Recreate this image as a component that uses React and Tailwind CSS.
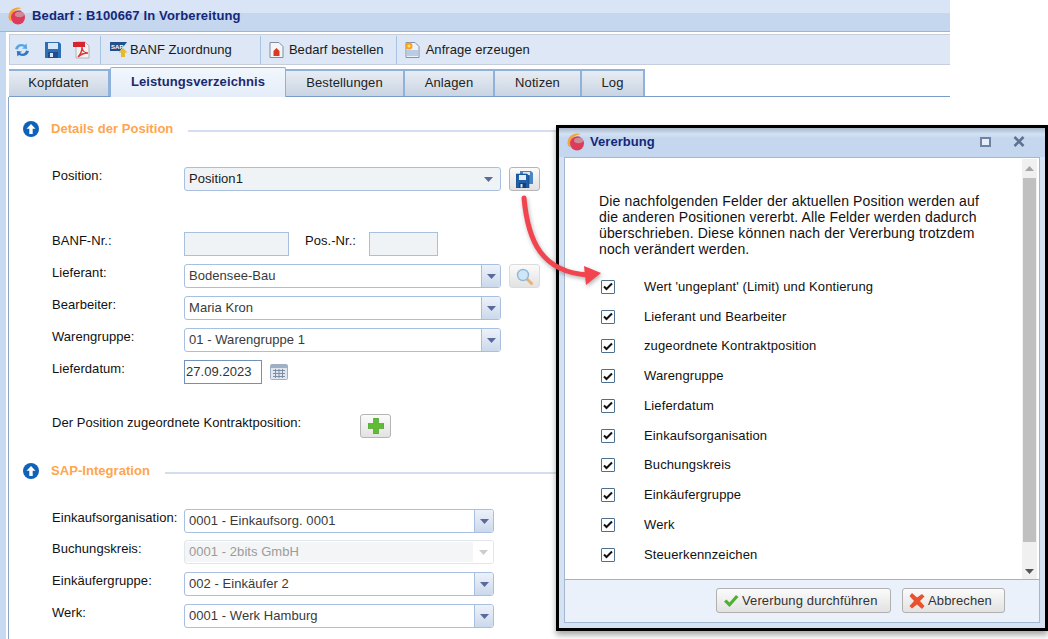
import React from "react";

const Logo = () => (
  <svg width="18" height="18" viewBox="0 0 18 18" className="shrink-0">
    <path d="M0.500 10C0.500 4.500 5 .5 10 .5c1.500 0 2.500.3 3.500.8C8 2 3.500 5.500 3 11c-.2 1.200 0 2.500.5 3.500C1.500 13.500.5 12 .5 10z" fill="#f2a53c" />
    <path d="M3.500 9.500C4.500 5.500 8 3 12.500 3l1 1.500L5 11z" fill="#a8a8a8" />
    <circle cx="10" cy="10.500" r="7" fill="#dc3b5a" />
    <ellipse cx="11.500" cy="7.500" rx="4.500" ry="2.800" fill="#c9a5ac" opacity=".75" />
  </svg>
);

const Refresh = () => (
  <svg width="18" height="18" viewBox="0 0 18 18">
    <path d="M2 8C3 3.500 8 1.500 12 4l1.600-1.400.6 5.400-5.200-.6L11 6C8.500 4.500 5.500 5.500 5 8.500z" fill="#56a6e6" />
    <path d="M16 10c-1 4.500-6 6.500-10 4l-1.600 1.400L3.800 10l5.200.6L7 12c2.500 1.500 5.500.5 6-2.500z" fill="#2f78c8" />
  </svg>
);

const Floppy = ({ c = "#2c6fb5" }) => (
  <svg width="16" height="16" viewBox="0 0 16 16">
    <path d="M0 0h14l2 2v14H0z" fill={c} />
    <rect x="3" y="1" width="10" height="6" fill="#d9e7f5" />
    <rect x="3" y="10" width="10" height="6" fill="#1c4f8c" />
    <rect x="5" y="11" width="3" height="4" fill="#d9e7f5" />
  </svg>
);

const DoubleFloppy = () => (
  <svg width="17" height="17" viewBox="0 0 17 17">
    <path d="M4 0h11l2 2v11H4z" fill="#4a86c5" />
    <rect x="7" y="1" width="7" height="3" fill="#d9e7f5" />
    <path d="M0 3h11l2 2v12H0z" fill="#1f5ea8" stroke="#173f73" strokeWidth=".5" />
    <rect x="3" y="4" width="7" height="5" fill="#e4eef8" />
    <rect x="3" y="12" width="7" height="5" fill="#143f78" />
    <rect x="4.500" y="13" width="2" height="3.500" fill="#d9e7f5" />
  </svg>
);

const Pdf = () => (
  <svg width="18" height="18" viewBox="0 0 18 18">
    <path d="M3 1h9l4 4v12H3z" fill="#f2f2f2" stroke="#b5b5b5" />
    <path d="M0 1h12v5H0z" fill="#d8242c" />
    <path d="M5 16c2-2 4-6 4-10 0 3 2 6 6 6-4 0-7 1-10 4z" fill="none" stroke="#e0333a" strokeWidth="1.400" />
  </svg>
);

const SapIcon = () => (
  <svg width="18" height="16" viewBox="0 0 18 16">
    <path d="M0 0h17l-7 9H0z" fill="#1f4f8f" />
    <text x="1" y="7" fontSize="6" fontWeight="700" fill="#fff" fontFamily="'Liberation Sans',sans-serif">SAP</text>
    <path d="M13 6l4.500 4.500H15V15h-4v-4.500H8.500z" fill="#e6b92e" />
  </svg>
);

const DocRed = () => (
  <svg width="15" height="16" viewBox="0 0 15 16">
    <path d="M1 .5h9l4 4v11H1z" fill="#f3f5f9" stroke="#7f8ea6" />
    <path d="M7.500 6l3 3v5h-6V9z" fill="#d83a22" />
  </svg>
);

const DocNew = () => (
  <svg width="15" height="16" viewBox="0 0 15 16">
    <path d="M1 .5h9l4 4v11H1z" fill="#eef2f8" stroke="#7f93b3" />
    <rect x="2" y="8" width="11" height="6" fill="#b9cbe6" />
    <circle cx="4" cy="4" r="3.500" fill="#f7a11f" />
    <circle cx="4" cy="4" r="1.600" fill="#ffe06a" />
  </svg>
);

const UpCircle = () => (
  <svg width="16" height="16" viewBox="0 0 16 16" className="shrink-0">
    <circle cx="8" cy="8" r="8" fill="#0f62b8" />
    <path d="M8 3l4.500 4.800H9.700V13H6.300V7.800H3.500z" fill="#fff" />
  </svg>
);

const Triangle = ({ c = "#5b6a9c" }) => (
  <svg width="9" height="5" viewBox="0 0 9 5"><path d="M0 0h9L4.500 5z" fill={c} /></svg>
);

const Combo = ({ value, width, variant }) => {
  if (variant === "position") {
    return (
      <div className={`${width} h-[24px] flex items-center border border-[#a9bfdf] rounded-[3px] bg-[#f0f3f5] pl-[4px] pr-[7px]`}>
        <span className="flex-1 text-[#1b1b1b]">{value}</span>
        <Triangle />
      </div>
    );
  }
  const off = variant === "disabled";
  return (
    <div className={`${width} h-[24px] flex items-stretch rounded-[3px] border ${off ? "border-[#e1e6ec] bg-white" : "border-[#a9bfdf] bg-white"}`}>
      <div className={`flex-1 pl-[4px] flex items-center ${off ? "bg-[#f3f5f6] text-[#9b9b9b] m-px ml-0" : "text-[#3a3a3a]"}`}>{value}</div>
      <div className={`w-[19px] flex items-center justify-center rounded-r-[3px] ${off ? "bg-white" : "border-l border-[#a9bfdf] bg-linear-to-b from-[#edf2fa] to-[#cbd9ec]"}`}>
        <Triangle c={off ? "#c9cdd2" : "#5b6a9c"} />
      </div>
    </div>
  );
};

const Row = ({ label, mt, lw = "w-[132px]", children }) => (
  <div className={`flex items-start h-[24px] ${mt}`}>
    <div className={`${lw} shrink-0 pt-[1px] text-[#111] whitespace-nowrap`}>{label}</div>
    {children}
  </div>
);

const IconBtn = ({ children, faded }) => (
  <div className={`w-[31px] h-[24px] ml-[8px] flex items-center justify-center rounded-[3px] border bg-linear-to-b from-[#fbfbfb] to-[#e2e2e2] ${faded ? "border-[#dcdcdc]" : "border-[#b5b5b5]"}`}>
    {children}
  </div>
);

const Section = ({ title, mt }) => (
  <div className={`flex items-center h-[16px] pl-[14px] ${mt}`}>
    <UpCircle />
    <span className="ml-[12px] font-bold text-[#ffa54d] whitespace-nowrap">{title}</span>
    <div className="flex-1 h-[2px] mt-[3px] bg-[#d3dff0] ml-[15px]" />
  </div>
);

const tabs = [
  ["Kopfdaten", "w-[101px]"],
  ["Leistungsverzeichnis", "w-[176px]", true],
  ["Bestellungen", "w-[119px]"],
  ["Anlagen", "w-[90px]"],
  ["Notizen", "w-[87px]"],
  ["Log", "w-[63px]"],
];

const ToolSep = ({ ml }) => <div className={`w-px h-[28px] bg-[#a8c2e2] ${ml}`} />;

const checks = [
  "Wert 'ungeplant' (Limit) und Kontierung",
  "Lieferant und Bearbeiter",
  "zugeordnete Kontraktposition",
  "Warengruppe",
  "Lieferdatum",
  "Einkaufsorganisation",
  "Buchungskreis",
  "Einkäufergruppe",
  "Werk",
  "Steuerkennzeichen",
];

const Check = () => (
  <div className="w-[14px] h-[14px] border border-[#4d6f92] rounded-[1px] flex items-center justify-center bg-white">
    <svg width="10" height="9" viewBox="0 0 10 9"><path d="M1 4.500l2.500 2.500L9 1.500" fill="none" stroke="#111" strokeWidth="2" /></svg>
  </div>
);

const DlgBtn = ({ w, icon, children, ml }) => (
  <div className={`${w} ${ml} h-[25px] flex items-center pl-[6px] gap-[3px] rounded-[3px] border border-[#b0b0b0] bg-linear-to-b from-[#fbfbfb] to-[#e2e2e2] text-[#333] tracking-[0.12px]`}>
    {icon}
    {children}
  </div>
);

export default function App() {
  return (
    <div className="relative w-[1048px] h-[639px] overflow-hidden bg-white font-['Liberation_Sans',Arial,sans-serif] text-[13px] leading-[16px] tracking-[0.05px]">
      {/* main window */}
      <div className="w-[950px] h-[639px] flex flex-col bg-[#c8daf1]">
        <div className="h-[32px] shrink-0 flex items-center pl-[8px] pt-[1px] border-b border-[#9fb4cf] bg-[linear-gradient(#d9e5f6_0,#d9e5f6_13px,#c5d7ee_13px,#c5d7ee_100%)]">
          <Logo />
          <span className="ml-[6px] font-bold text-[#15277a] whitespace-nowrap tracking-[0.14px]">Bedarf : B100667 In Vorbereitung</span>
        </div>
        <div className="flex-1 flex flex-col ml-[6px] pl-[2px] border-l border-[#fff] bg-white">
          <div className="h-[2px] shrink-0" />
          <div className="h-[31px] shrink-0 flex items-center border-y border-[#c6cedb] bg-[#dde7f6] border-l text-[#1a1a1a] whitespace-nowrap">
            <div className="w-[3px]" />
            <Refresh />
            <div className="ml-[14px]"><Floppy /></div>
            <div className="ml-[12px]"><Pdf /></div>
            <ToolSep ml="ml-[9px]" />
            <div className="ml-[9px]"><SapIcon /></div>
            <span className="ml-[2px]">BANF Zuordnung</span>
            <ToolSep ml="ml-[28px]" />
            <div className="ml-[8px]"><DocRed /></div>
            <span className="ml-[5px]">Bedarf bestellen</span>
            <ToolSep ml="ml-[12px]" />
            <div className="ml-[8px]"><DocNew /></div>
            <span className="ml-[6px]">Anfrage erzeugen</span>
          </div>
          <div className="h-[32px] shrink-0 flex items-end border-b border-[#7a9cc8] tracking-[0.12px]">
            {tabs.map(([t, w, active]) =>
              active ? (
                <div key={t} className={`${w} h-[30px] flex items-center justify-center border-x border-t border-[#8db0dc] bg-linear-to-b from-[#f2f7fd] to-[#e4edf9] font-bold text-[#1a2a70] -mb-px pb-[2px] rounded-t-[2px] tracking-[0.1px]`}>{t}</div>
              ) : (
                <div key={t} className={`${w} h-[27px] flex items-center justify-center pb-[2px] border-r-2 border-t-2 border-[#8fb1da] bg-linear-to-b from-[#e8edf4] to-[#c9d4e2] text-[#222]`}>{t}</div>
              )
            )}
          </div>
          <div className="flex-1 border-l border-[#8aa5c8] bg-white -ml-px">
            <Section title="Details der Position" mt="mt-[24px]" />
            <div className="pl-[43px]">
              <Row label="Position:" mt="mt-[30px]">
                <Combo value="Position1" width="w-[317px]" variant="position" />
                <IconBtn><DoubleFloppy /></IconBtn>
              </Row>
              <Row label="BANF-Nr.:" mt="mt-[41px]">
                <div className="w-[105px] h-[24px] border border-[#a9bfdf] bg-[#f0f3f5]" />
                <span className="ml-[16px] w-[64px] pt-[1px] text-[#111]">Pos.-Nr.:</span>
                <div className="w-[69px] h-[24px] border border-[#a9bfdf] bg-[#f0f3f5]" />
              </Row>
              <Row label="Lieferant:" mt="mt-[8px]">
                <Combo value="Bodensee-Bau" width="w-[317px]" />
                <IconBtn faded>
                  <svg width="17" height="17" viewBox="0 0 17 17">
                    <path d="M10 10l5.500 5.500" stroke="#e8b27c" strokeWidth="3" strokeLinecap="round" />
                    <circle cx="7" cy="7" r="5.500" fill="#cfe6f7" stroke="#8fb8d8" strokeWidth="1.400" />
                  </svg>
                </IconBtn>
              </Row>
              <Row label="Bearbeiter:" mt="mt-[8px]"><Combo value="Maria Kron" width="w-[317px]" /></Row>
              <Row label="Warengruppe:" mt="mt-[8px]"><Combo value="01 - Warengruppe 1" width="w-[317px]" /></Row>
              <Row label="Lieferdatum:" mt="mt-[8px]">
                <div className="w-[78px] h-[24px] border border-[#6f93b8] pl-[1px] flex items-center text-[#333]">27.09.2023</div>
                <svg width="18" height="16" viewBox="0 0 18 16" className="ml-[8px] mt-[4px]">
                  <rect x=".5" y=".5" width="17" height="15" rx="1" fill="#dfe6ee" stroke="#9fb0c4" />
                  <rect x="1" y="1" width="16" height="3" fill="#9fb0c4" />
                  <path d="M3 6.500h12M3 9.500h12M3 12.500h12M5.500 5v9M9 5v9M12.500 5v9" stroke="#7d8fa6" strokeWidth="1" />
                </svg>
              </Row>
              <Row label="Der Position zugeordnete Kontraktposition:" lw="w-[308px]" mt="mt-[30px]">
                <div className="w-[31px] h-[24px] flex items-center justify-center rounded-[3px] border border-[#b5b5b5] bg-linear-to-b from-[#fbfbfb] to-[#e2e2e2]">
                  <svg width="16" height="16" viewBox="0 0 16 16"><path d="M5.500 0h5v5.500H16v5h-5.500V16h-5v-5.500H0v-5h5.500z" fill="#5fbb34" stroke="#3f9a22" strokeWidth=".6" /></svg>
                </div>
              </Row>
            </div>
            <Section title="SAP-Integration" mt="mt-[25px]" />
            <div className="pl-[43px]">
              <Row label="Einkaufsorganisation:" mt="mt-[30px]"><Combo value="0001 - Einkaufsorg. 0001" width="w-[310px]" /></Row>
              <Row label="Buchungskreis:" mt="mt-[7px]"><Combo value="0001 - 2bits GmbH" width="w-[310px]" variant="disabled" /></Row>
              <Row label="Einkäufergruppe:" mt="mt-[8px]"><Combo value="002 - Einkäufer 2" width="w-[310px]" /></Row>
              <Row label="Werk:" mt="mt-[8px]"><Combo value="0001 - Werk Hamburg" width="w-[310px]" /></Row>
            </div>
          </div>
        </div>
      </div>

      {/* dialog window */}
      <div className="absolute left-[556px] top-[125px] w-[492px] h-[506px] border-[3px] border-black bg-[#d4e2f4] shadow-[0_4px_6px_rgba(0,0,0,0.35)] flex flex-col">
        <div className="h-[29px] shrink-0 flex items-center pl-[8px] pr-[20px] pb-[2px] bg-[linear-gradient(#a9b8cb_0,#d3e1f3_6px,#c5d7ee_10px,#c5d7ee_100%)]">
          <Logo />
          <span className="ml-[5px] font-bold text-[#15277a]">Vererbung</span>
          <div className="flex-1" />
          <div className="w-[11px] h-[10px] border-2 border-[#6f84a4] bg-[#e6eef9]" />
          <svg width="12" height="11" viewBox="0 0 12 11" className="ml-[22px]"><path d="M1.500 1l9 9M10.500 1l-9 9" stroke="#5f7190" strokeWidth="2.600" /></svg>
        </div>
        <div className="flex-1 mx-[5px] mb-[5px] border border-[#a4b7cf] flex flex-col bg-white">
          <div className="h-[421px] flex pl-px pt-px">
            <div className="flex-1 pl-[33px] pt-[34px]">
              <p className="w-[395px] text-[#111] text-[14px] tracking-[0.15px]">
                Die nachfolgenden Felder der aktuellen Position werden auf die anderen Positionen vererbt. Alle Felder werden dadurch überschrieben. Diese können nach der Vererbung trotzdem noch verändert werden.
              </p>
              <div className="mt-[15px] tracking-[0.12px]">
                {checks.map((c) => (
                  <div key={c} className="h-[29.75px] flex items-center text-[#111]">
                    <div className="ml-[2px] w-[43px]"><Check /></div>
                    {c}
                  </div>
                ))}
              </div>
            </div>
            <div className="w-[15px] mr-[2px] bg-[#f0f0f0] flex flex-col items-center">
              <div className="h-[19px] flex items-center justify-center"><svg width="9" height="5" viewBox="0 0 9 5"><path d="M0 5h9L4.500 0z" fill="#a5a5a5" /></svg></div>
              <div className="w-[13px] h-[364px] bg-[#c0c0c0]" />
              <div className="flex-1 flex items-end pb-[5px]"><Triangle c="#555" /></div>
            </div>
          </div>
          <div className="flex-1 flex items-center justify-end border-t border-[#9ab3cf] bg-[#eaf1fb] pr-[34px] pb-[1px]">
            <DlgBtn w="w-[175px]" icon={
              <svg width="16" height="14" viewBox="0 0 16 14"><path d="M1 7.500l2.500-2 3 3L13 1l2.500 2L6.500 13z" fill="#4eb02f" /></svg>
            }>Vererbung durchführen</DlgBtn>
            <DlgBtn w="w-[103px]" ml="ml-[11px]" icon={
              <svg width="16" height="16" viewBox="0 0 16 16"><path d="M3 0l5 4.500L13 1l2.500 2.500L11 8l4.500 5L13 16 8 11.500 3 15.500.5 13 5 8 .5 3z" fill="#e8522e" /></svg>
            }>Abbrechen</DlgBtn>
          </div>
        </div>
      </div>

      {/* red pointer over both windows */}
      <svg width="100" height="100" viewBox="0 0 100 100" className="absolute left-[510px] top-[192px] drop-shadow-[1px_2px_2px_rgba(0,0,0,0.3)]">
        <path d="M14 6C18 50 32 80 78 83" fill="none" stroke="#f2444e" strokeWidth="5" strokeLinecap="round" />
        <path d="M74 74l17 7-15 12z" fill="#f2444e" />
      </svg>
    </div>
  );
}
